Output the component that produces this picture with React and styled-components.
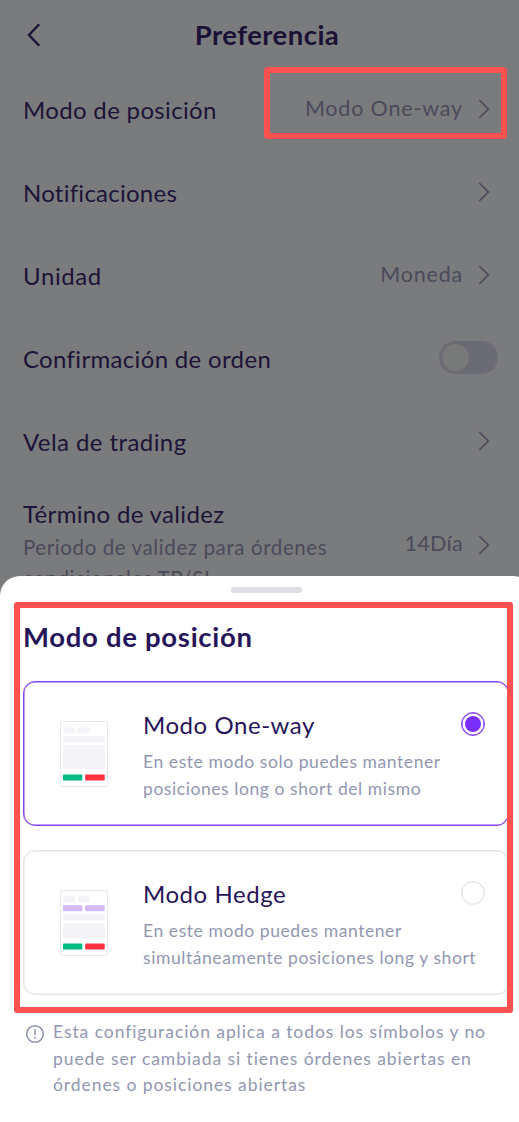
import React, { useState } from "react";
import styled, { createGlobalStyle } from "styled-components";

const settings = [
  { label: "Modo de posición", value: "Modo One-way", track: 0.33, valueTrack: 0.83, marked: true },
  { label: "Notificaciones", track: 0.25 },
  { label: "Unidad", value: "Moneda", track: 0.6, valueTrack: 0.8 },
  { label: "Confirmación de orden", toggle: true, track: 0.33 },
  { label: "Vela de trading", track: 0.42 },
];

const modes = [
  {
    id: "oneway",
    name: "Modo One-way",
    lines: ["En este modo solo puedes mantener", "posiciones long o short del mismo"],
  },
  {
    id: "hedge",
    name: "Modo Hedge",
    lines: ["En este modo puedes mantener", "simultáneamente posiciones long y short"],
  },
];

const Chevron = () => (
  <ChevronIcon viewBox="0 0 12 20">
    <path d="M1.2 1L10.3 10L1.2 19" />
  </ChevronIcon>
);

const Preview = ({ hedge }) => (
  <PreviewIcon viewBox="0 0 48 66">
    <rect x="0.5" y="0.5" width="47" height="65" rx="2" fill="#fff" stroke="#e6e7ee" />
    <g fill="#f3f3f8">
      <rect x="3" y="6.3" width="12" height="6" rx="1.5" />
      <rect x="17.7" y="6.3" width="12" height="6" rx="1.5" />
      <rect x="3" y={hedge ? 24.3 : 15.3} width="42" height="6" rx="1.2" />
      <rect x="3" y={hedge ? 33.2 : 24.3} width="42" height={hedge ? 15 : 24} rx="1.2" />
    </g>
    {hedge && (
      <g fill="#d5baff">
        <rect x="3" y="15.2" width="19.3" height="6" rx="0.8" />
        <rect x="25.2" y="15.2" width="19.5" height="6" rx="0.8" />
      </g>
    )}
    <rect x="3" y="53.5" width="19.3" height="6" rx="0.6" fill="#00bb82" />
    <rect x="25.2" y="53.5" width="19.5" height="6" rx="0.6" fill="#ff3040" />
  </PreviewIcon>
);

const App = () => {
  const [selected, setSelected] = useState("oneway");

  return (
    <Screen>
      <GlobalStyle />
      <Page>
        <Header>
          <BackIcon viewBox="0 0 14 24">
            <path d="M12.2 1.2L2 12L12.2 22.8" />
          </BackIcon>
          <Title>Preferencia</Title>
        </Header>
        {settings.map((item) => (
          <Row key={item.label}>
            <Label $track={item.track}>{item.label}</Label>
            {item.toggle ? (
              <Toggle>
                <Knob />
              </Toggle>
            ) : (
              <Side>
                {item.value && <Value $track={item.valueTrack}>{item.value}</Value>}
                <Chevron />
              </Side>
            )}
            {item.marked && <RowMark />}
          </Row>
        ))}
        <TermRow>
          <div>
            <Label $track={0.33}>Término de validez</Label>
            <Hint>
              Periodo de validez para órdenes
              <br />
              condicionales TP/SL
            </Hint>
          </div>
          <Side>
            <Value $track={0.3}>14Día</Value>
            <Chevron />
          </Side>
        </TermRow>
      </Page>

      <Sheet>
        <Handle />
        <SheetTitle>Modo de posición</SheetTitle>
        <Options>
          {modes.map((mode) => (
            <Card
              key={mode.id}
              $active={selected === mode.id}
              onClick={() => setSelected(mode.id)}
            >
              <Preview hedge={mode.id === "hedge"} />
              <CardText>
                <CardTitle>{mode.name}</CardTitle>
                {mode.lines.map((line) => (
                  <CardLine key={line}>{line}</CardLine>
                ))}
              </CardText>
              <Radio $active={selected === mode.id} />
            </Card>
          ))}
        </Options>
        <Note>
          <InfoIcon viewBox="0 0 20 20">
            <circle cx="10" cy="10" r="8.3" />
            <path d="M10 5.2V11M10 13V14.8" />
          </InfoIcon>
          <NoteText>
            Esta configuración aplica a todos los símbolos y no
            <br />
            puede ser cambiada si tienes órdenes abiertas en
            <br />
            órdenes o posiciones abiertas
          </NoteText>
        </Note>
        <SheetMark />
      </Sheet>
    </Screen>
  );
};

export default App;

const GlobalStyle = createGlobalStyle`
  * {
    box-sizing: border-box;
  }

  body {
    margin: 0;
    font-family: Lato, "Liberation Sans", sans-serif;
    white-space: nowrap;
  }
`;

const Screen = styled.div`
  display: flex;
  flex-direction: column;
  width: 519px;
  height: 1122px;
  overflow: hidden;
  background: #7a7b7c;
`;

const Page = styled.div`
  flex: none;
  width: 533px;
  height: 576px;
`;

const Header = styled.div`
  display: flex;
  align-items: center;
  height: 69px;
  padding: 0 27px;
`;

const BackIcon = styled.svg`
  flex: none;
  width: 14px;
  height: 24px;
  fill: none;
  stroke: #1d1338;
  stroke-width: 2.4;
`;

const Title = styled.h1`
  flex: 1;
  margin: 1px 13px 0 0;
  font-size: 27.5px;
  line-height: 34px;
  font-weight: 700;
  letter-spacing: 0.45px;
  text-align: center;
  color: #1b1136;
`;

const Row = styled.div`
  position: relative;
  display: flex;
  align-items: center;
  justify-content: space-between;
  height: 83px;
  padding: 0 35px 0 23px;
`;

const Label = styled.div`
  padding-bottom: 2px;
  font-size: 24px;
  line-height: 30px;
  letter-spacing: ${(props) => props.$track}px;
  color: #1d1338;
`;

const Side = styled.div`
  display: flex;
  align-items: center;
  gap: 15px;
  padding-bottom: 4px;
`;

const Value = styled.span`
  padding-bottom: 2px;
  font-size: 21.5px;
  line-height: 28px;
  letter-spacing: ${(props) => props.$track}px;
  color: #4b4a5a;
`;

const ChevronIcon = styled.svg`
  width: 12px;
  height: 20px;
  margin-right: 8px;
  fill: none;
  stroke: #4b4a5a;
  stroke-width: 1.7;
`;

const Toggle = styled.div`
  width: 59px;
  height: 33px;
  margin-bottom: 5px;
  padding: 3px;
  border-radius: 17px;
  background: #6b6b73;
`;

const Knob = styled.div`
  width: 27px;
  height: 27px;
  border-radius: 50%;
  background: #787979;
`;

/* red highlight around the current value */
const RowMark = styled.div`
  position: absolute;
  top: -2px;
  left: 264px;
  width: 243px;
  height: 72px;
  border: 6px solid #fe5150;
  border-radius: 4px;
`;

const TermRow = styled.div`
  display: flex;
  justify-content: space-between;
  align-items: flex-start;
  padding: 15px 35px 0 23px;

  ${Side} {
    margin-top: 30px;
  }

  ${Value} {
    padding-bottom: 4px;
  }
`;

const Hint = styled.div`
  margin-top: 1px;
  font-size: 20.5px;
  line-height: 30.5px;
  letter-spacing: 0.6px;
  color: #4b4a5a;
`;

const Sheet = styled.div`
  position: relative;
  flex: none;
  width: 533px;
  height: 546px;
  padding: 11px 24px 0 23px;
  border-radius: 20px 20px 0 0;
  background: #fff;
`;

const Handle = styled.div`
  width: 71px;
  height: 6px;
  margin: 0 auto;
  border-radius: 3px;
  background: #dddde4;
`;

const SheetTitle = styled.h2`
  margin: 27px 0 0;
  font-size: 27.5px;
  line-height: 34px;
  font-weight: 700;
  letter-spacing: 0.7px;
  color: #27155a;
`;

const Options = styled.div`
  display: flex;
  flex-direction: column;
  gap: 24px;
  margin-top: 27px;
`;

const Card = styled.div`
  display: flex;
  align-items: center;
  height: 145px;
  padding: 0 23px 0 36px;
  border: 1px solid ${(props) => (props.$active ? "#8443f5" : "#e4e4ed")};
  border-radius: 12px;
  box-shadow: inset 0 0 0 0.5px ${(props) => (props.$active ? "#8443f5" : "#e4e4ed")};
`;

const PreviewIcon = styled.svg`
  flex: none;
  width: 48px;
  height: 66px;
`;

const CardText = styled.div`
  flex: 1;
  min-width: 0;
  margin: 5px 0 0 35px;
`;

const CardTitle = styled.div`
  margin-bottom: 8px;
  font-size: 24px;
  line-height: 30px;
  letter-spacing: 0.55px;
  color: #27155a;
`;

const CardLine = styled.div`
  font-size: 17.5px;
  line-height: 27px;
  letter-spacing: 0.57px;
  color: #9297b1;
`;

const Radio = styled.div`
  flex: none;
  align-self: flex-start;
  width: 24px;
  height: 24px;
  margin-top: 30px;
  padding: 3px;
  border: 1px solid ${(props) => (props.$active ? "#7e37fb" : "#e4e4ed")};
  border-radius: 50%;
  box-shadow: inset 0 0 0 0.5px ${(props) => (props.$active ? "#7e37fb" : "#e4e4ed")};

  &::before {
    content: "";
    display: block;
    height: 100%;
    border-radius: 50%;
    background: ${(props) => (props.$active ? "#7b2fff" : "transparent")};
  }
`;

const Note = styled.div`
  display: flex;
  gap: 8px;
  margin: 24px 0 0 2px;
`;

const InfoIcon = styled.svg`
  flex: none;
  width: 20px;
  height: 20px;
  margin-top: 5px;
  fill: none;
  stroke: #9297b1;
  stroke-width: 1.6;
`;

const NoteText = styled.div`
  font-size: 17.5px;
  line-height: 26.7px;
  letter-spacing: 0.93px;
  color: #9297b1;
`;

/* red highlight around the two modes */
const SheetMark = styled.div`
  position: absolute;
  top: 26px;
  left: 14px;
  width: 499px;
  height: 411px;
  border: 6px solid #fe5150;
  border-radius: 3px;
  pointer-events: none;
`;
